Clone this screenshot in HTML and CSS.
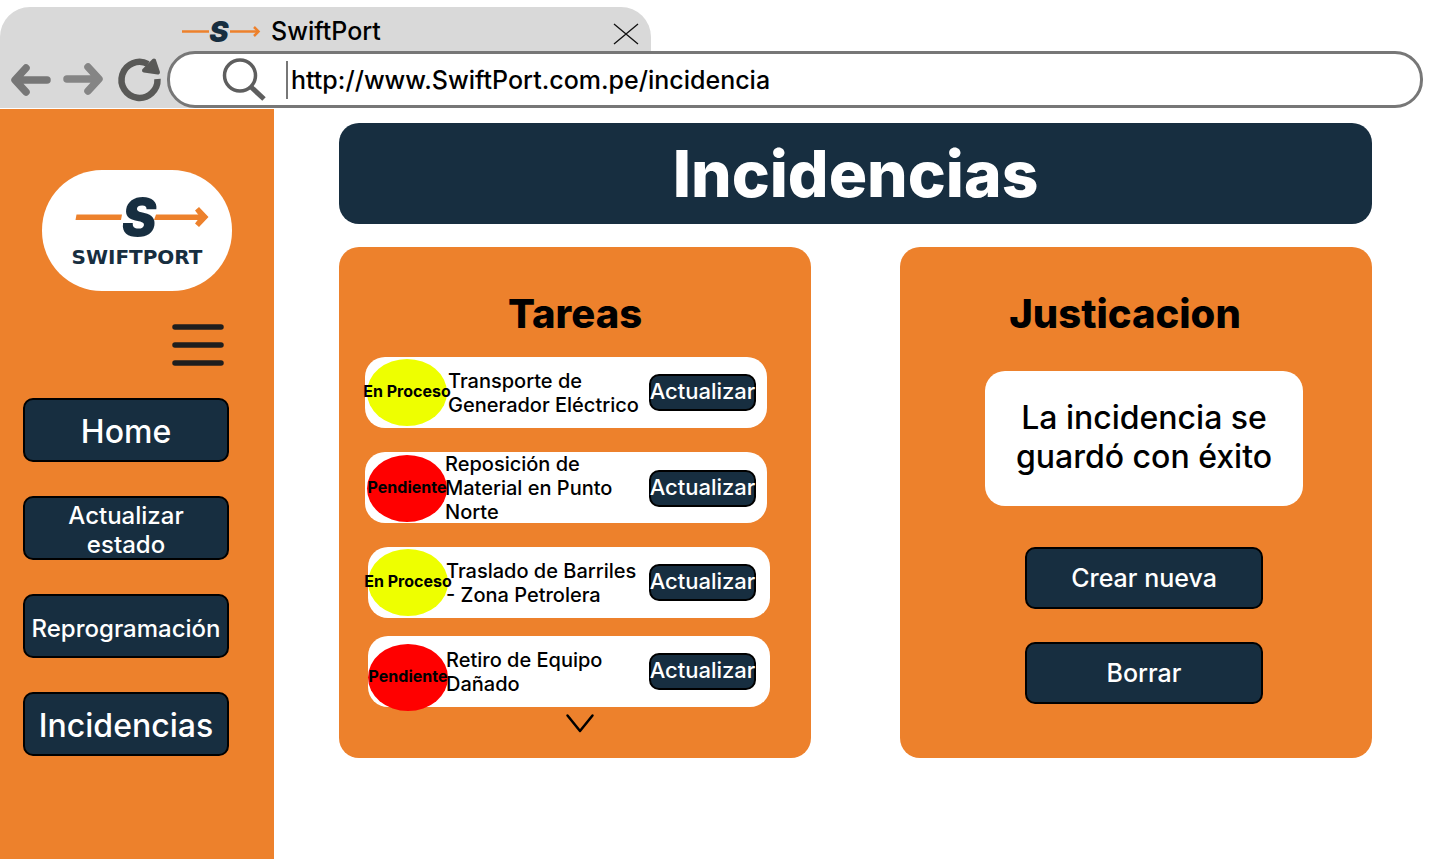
FILE: index.html
```html
<!DOCTYPE html>
<html lang="es">
<head>
<meta charset="utf-8">
<meta name="viewport" content="width=device-width, initial-scale=1">
<title>SwiftPort - Incidencias</title>
<link rel="stylesheet" href="styles.css">
</head>
<body>
<header class="browser">
  <div class="tab">
    <svg class="tab-logo" viewBox="0 0 78 24" aria-hidden="true">
      <path class="logo-line" d="M0 12.500H27M48 12.500H76"/>
      <path class="logo-line" d="M72 8L76.500 12.500L72 17"/>
      <text class="logo-s" x="37" y="23" font-size="29" text-anchor="middle">S</text>
    </svg>
    <span class="tab-title">SwiftPort</span>
    <button class="icon-button tab-close" type="button" aria-label="Cerrar">
      <svg width="26" height="22" viewBox="0 0 26 22"><path d="M1 1L25 21M25 1L1 21" fill="none" stroke="#111" stroke-width="1.3"/></svg>
    </button>
  </div>
  <div class="toolbar">
    <div class="history">
      <button class="icon-button" type="button" aria-label="Atrás">
        <svg width="40" height="32" viewBox="0 0 40 32"><path d="M36 16H6M15 4L4 16L15 28" fill="none" stroke="#777" stroke-width="7.500" stroke-linecap="round" stroke-linejoin="round"/></svg>
      </button>
      <button class="icon-button" type="button" aria-label="Adelante">
        <svg width="40" height="32" viewBox="0 0 40 32"><path d="M4 15H34M25 3L36 15L25 27" fill="none" stroke="#858585" stroke-width="7.500" stroke-linecap="round" stroke-linejoin="round"/></svg>
      </button>
      <button class="icon-button reload" type="button" aria-label="Recargar">
        <svg width="44" height="44" viewBox="0 0 44 44"><path d="M30 6A18 18 0 1 0 39.500 21" fill="none" stroke="#595957" stroke-width="6.500"/><path d="M36 2.500L40 14.500L26 12.500Z" fill="#595957" stroke="#595957" stroke-width="4" stroke-linejoin="round"/></svg>
      </button>
    </div>
    <label class="address">
      <svg class="search" viewBox="0 0 44 44" aria-hidden="true"><circle cx="18" cy="17.500" r="15.500" fill="none" stroke="#5e5e5e" stroke-width="3.500"/><path d="M28.500 28.500L42 41" fill="none" stroke="#5e5e5e" stroke-width="5"/></svg>
      <input class="url" type="text" aria-label="Dirección" value="http://www.SwiftPort.com.pe/incidencia">
    </label>
  </div>
</header>
<div class="page">
  <aside class="sidebar">
    <div class="brand">
      <svg width="144" height="78" viewBox="0 0 144 78" role="img" aria-label="SwiftPort">
        <path d="M11.500 22.500H57L56 28H10.500ZM91 22.500H136V28H89Z" fill="#ed812c"/>
        <path d="M130 18.500L134 15L143.500 25L134 35L130 31.500L135 25Z" fill="#ed812c"/>
        <text class="logo-s" x="74" y="44" font-size="52" text-anchor="middle">S</text>
        <text class="logo-name" x="72" y="72" text-anchor="middle">SWIFTPORT</text>
      </svg>
    </div>
    <button class="icon-button menu" type="button" aria-label="Menú">
      <svg width="52" height="42" viewBox="0 0 52 42"><path d="M3 3H49M3 21H49M3 39H49" stroke="#1e1e1e" stroke-width="5.500" stroke-linecap="round"/></svg>
    </button>
    <nav class="nav">
      <button class="button nav-button large" type="button">Home</button>
      <button class="button nav-button" type="button">Actualizar<br>estado</button>
      <button class="button nav-button" type="button">Reprogramación</button>
      <button class="button nav-button large" type="button">Incidencias</button>
    </nav>
  </aside>
  <main class="main">
    <h1 class="title">Incidencias</h1>
    <div class="cards">
      <section class="card">
        <h2 class="card-title">Tareas</h2>
        <ul class="tasks">
          <li class="task task-wide"><span class="status in-progress">En Proceso</span><span class="task-name">Transporte de Generador Eléctrico</span><button class="button update" type="button">Actualizar</button></li>
          <li class="task"><span class="status pending">Pendiente</span><span class="task-name">Reposición de Material en Punto Norte</span><button class="button update" type="button">Actualizar</button></li>
          <li class="task task-inset"><span class="status in-progress">En Proceso</span><span class="task-name">Traslado de Barriles - Zona Petrolera</span><button class="button update" type="button">Actualizar</button></li>
          <li class="task task-inset task-last"><span class="status pending">Pendiente</span><span class="task-name">Retiro de Equipo Dañado</span><button class="button update" type="button">Actualizar</button></li>
        </ul>
        <button class="icon-button more" type="button" aria-label="Ver más">
          <svg width="28" height="18" viewBox="0 0 28 18"><path d="M1.500 1.500L14 17L26.500 1.500" fill="none" stroke="#000" stroke-width="2.500" stroke-linecap="round" stroke-linejoin="round"/></svg>
        </button>
      </section>
      <section class="card">
        <h2 class="card-title reason-title">Justicacion</h2>
        <div class="reason">
          <p class="message">La incidencia se guardó con éxito</p>
          <button class="button action" type="button">Crear nueva</button>
          <button class="button action" type="button">Borrar</button>
        </div>
      </section>
    </div>
  </main>
</div>
</body>
</html>
```
FILE: styles.css
```css
* { box-sizing: border-box; }

body {
  display: flex;
  flex-direction: column;
  min-height: 100vh;
  margin: 0;
  background: #fff;
  color: #000;
  font-family: Inter, "Liberation Sans", sans-serif;
  font-weight: 500;
}

button, input { font: inherit; }
svg { display: block; flex: none; overflow: visible; }

.icon-button {
  padding: 0;
  border: 0;
  background: none;
}

.button {
  display: flex;
  align-items: center;
  justify-content: center;
  padding: 0;
  border: 2px solid #000;
  border-radius: 10px;
  background: #172e40;
  color: #fff;
  font-size: 24px;
  line-height: 29px;
}

/* Browser bar */
.browser { padding-top: 7px; }

.tab {
  display: flex;
  align-items: center;
  width: 651px;
  max-width: 100%;
  height: 44px;
  padding: 4px 12px 0 182px;
  border-radius: 30px 30px 0 0;
  background: #d9d9d9;
}

.tab-logo { width: 78px; height: 24px; }
.logo-line { fill: none; stroke: #ed812c; stroke-width: 2.5; }
.logo-s { fill: #172e40; font-weight: 900; font-style: italic; }
.tab-title { margin-left: 11px; font-size: 25px; line-height: 30px; }
.tab-close { margin: 6px 0 0 auto; }

.toolbar {
  display: flex;
  min-height: 57px;
  padding-right: 17px;
  background: linear-gradient(#d9d9d9, #d9d9d9) left / 200px 100% no-repeat;
}

.history {
  display: flex;
  align-items: center;
  gap: 12px;
  width: 167px;
  padding-left: 11px;
}

.reload { margin-left: 3px; }

.address {
  display: flex;
  flex: 1;
  align-items: center;
  min-width: 0;
  padding: 0 24px 0 52px;
  border: 3px solid #777;
  border-radius: 28px;
  background: #fff;
}

.search { width: 44px; height: 44px; }

.url {
  flex: 1;
  min-width: 0;
  height: 38px;
  margin-left: 20px;
  padding: 0 0 0 3px;
  border: 0;
  border-left: 2px solid #777;
  outline: 0;
  background: none;
  color: #000;
  font-size: 25px;
}

/* Sidebar */
.page {
  display: flex;
  flex: 1;
  margin-top: 1px;
}

.sidebar {
  flex: none;
  width: 274px;
  padding: 61px 45px 32px 23px;
  background: #ed812c;
}

.brand {
  display: flex;
  align-items: center;
  justify-content: center;
  width: 190px;
  height: 121px;
  margin-left: 19px;
  border-radius: 60px;
  background: #fff;
}

.logo-name {
  fill: #172e40;
  font-family: "DejaVu Sans", sans-serif;
  font-size: 20px;
  font-weight: 700;
}
.menu { display: block; margin: 33px 5px 32px auto; }
.nav { display: grid; gap: 34px; }
.nav-button { height: 64px; padding-top: 4px; }
.large { padding-top: 2px; font-size: 32px; line-height: 39px; }

/* Content */
.main {
  flex: 1;
  min-width: 0;
  padding: 14px 68px 32px 65px;
}

.title {
  margin: 0 0 23px;
  padding: 12px;
  border-radius: 20px;
  background: #172e40;
  color: #fff;
  font-size: 64px;
  font-weight: 800;
  line-height: 77px;
  text-align: center;
}

.cards {
  display: grid;
  grid-template-columns: 1fr 1fr;
  gap: 89px;
}

.card {
  padding: 43px 0 26px;
  border-radius: 20px;
  background: #ed812c;
}

.card-title {
  margin: 0;
  font-size: 40px;
  font-weight: 800;
  line-height: 48px;
  text-align: center;
}

.tasks {
  display: grid;
  gap: 24px;
  margin: 19px 44px 0 26px;
  padding: 0;
  list-style: none;
}

.task {
  display: grid;
  grid-template-columns: 78px 1fr 107px;
  align-items: center;
  height: 71px;
  padding: 0 11px 0 2px;
  border-radius: 20px;
  background: #fff;
}

.task-wide { grid-template-columns: 81px 1fr 107px; }
.task-inset { margin: 0 -3px 0 3px; padding: 0 14px 0 0; }
.task-last { margin-top: -6px; }
.task-last .status { align-self: end; margin-bottom: -4px; }

.status {
  display: flex;
  align-items: center;
  justify-content: center;
  width: 80px;
  height: 67px;
  padding-bottom: 3px;
  border-radius: 50%;
  font-size: 16px;
  font-weight: 700;
  white-space: nowrap;
}

.in-progress { background: #eeff00; }
.pending { background: #ff0000; }
.task-name { font-size: 20px; line-height: 24px; }

.update {
  height: 37px;
  padding-bottom: 2px;
  font-size: 22px;
  line-height: 27px;
}

.more { display: block; margin: 7px 217px 0 auto; }

.reason-title { padding-right: 22px; }

.reason {
  display: grid;
  justify-items: center;
  gap: 33px;
  margin: 33px 69px 0 85px;
}

.message {
  width: 100%;
  margin: 0 0 8px;
  padding: 27px 24px 30px;
  border-radius: 20px;
  background: #fff;
  font-size: 32px;
  line-height: 39px;
  text-align: center;
}

.action {
  width: 75%;
  height: 62px;
  font-size: 25px;
}
```
